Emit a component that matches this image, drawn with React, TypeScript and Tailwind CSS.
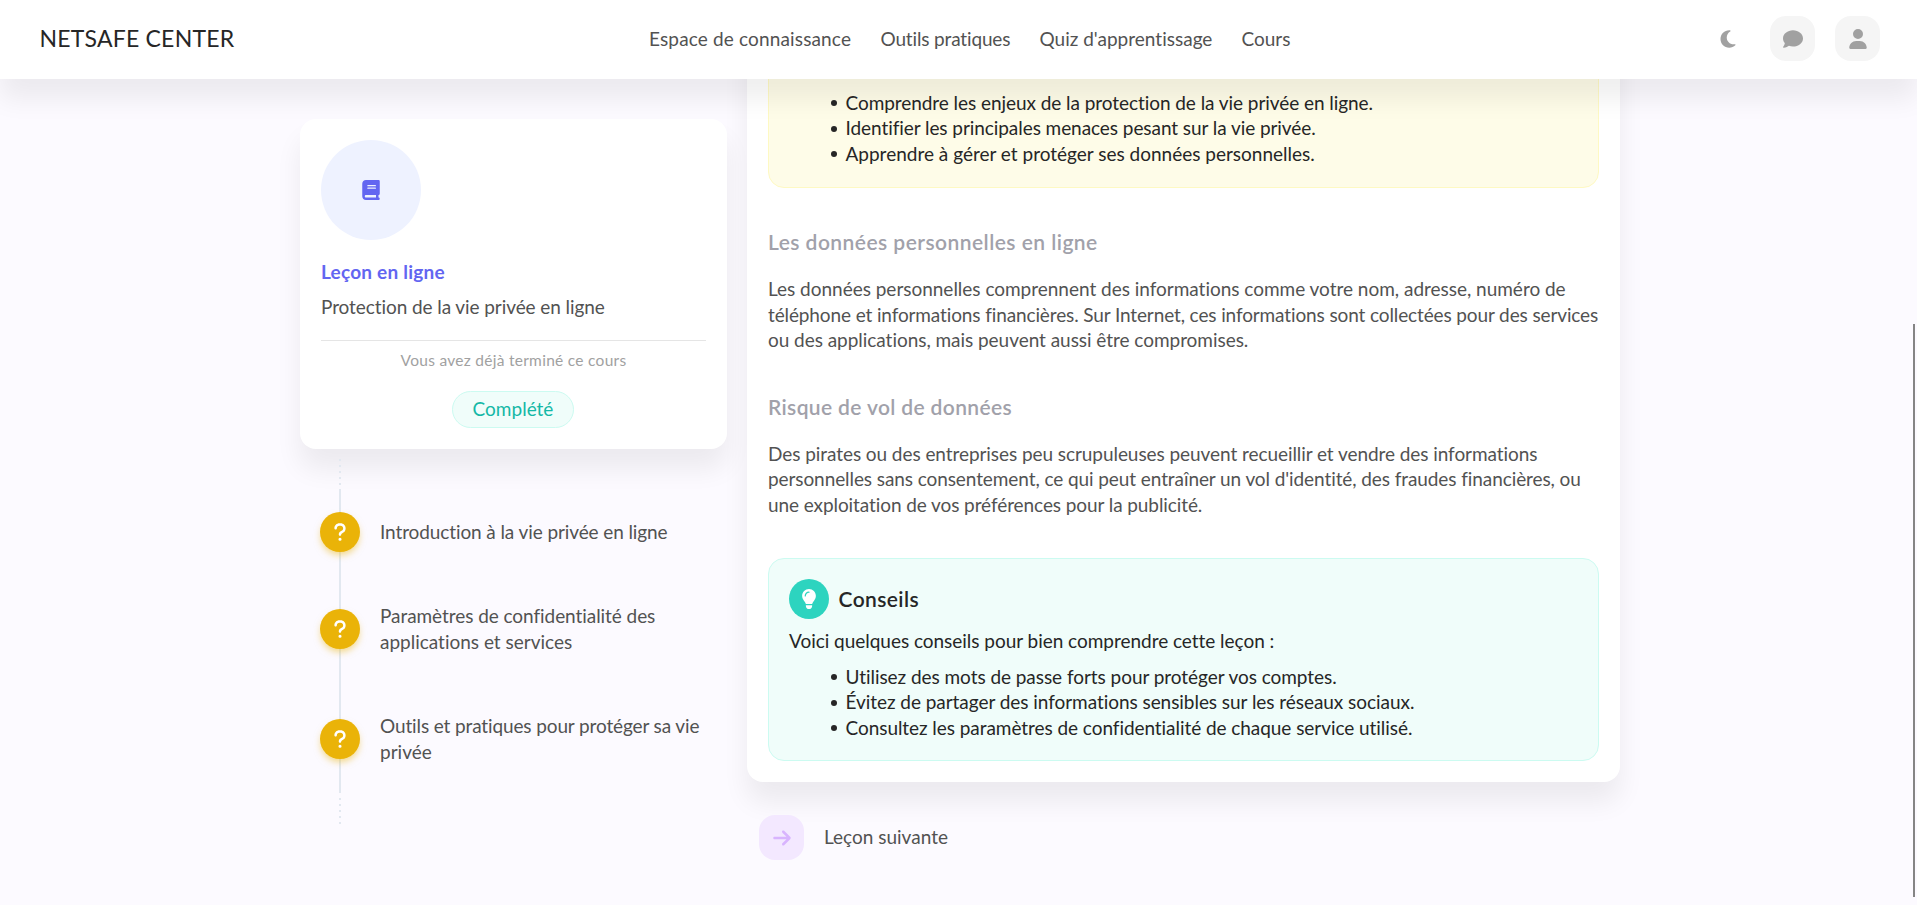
import type { ReactNode } from "react";
import {
  FaMoon,
  FaComment,
  FaUser,
  FaBook,
  FaQuestion,
  FaLightbulb,
  FaArrowRight,
} from "react-icons/fa6";

const cardShadow = "shadow-[0_20px_27px_0_rgba(0,0,0,0.065)]";

function Line({ className = "", children }: { className?: string; children: ReactNode }) {
  return <span className={`block whitespace-nowrap ${className}`}>{children}</span>;
}

function Bullet({ className = "", children }: { className?: string; children: ReactNode }) {
  return (
    <li className="flex items-center gap-[8.5px] pl-[42px] leading-[25.5px]">
      <span className="mt-[2px] size-[6px] shrink-0 rounded-full bg-neutral-800" />
      <span className={`whitespace-nowrap ${className}`}>{children}</span>
    </li>
  );
}

function Header() {
  return (
    <header className="relative z-10 flex h-[79px] shrink-0 items-center bg-white pr-[37px] pl-[39.5px] shadow-[0_20px_27px_0_rgba(0,0,0,0.065)]">
      <div className="w-[609.5px] pb-px text-[23px] tracking-[0.22px] text-neutral-800">NETSAFE CENTER</div>
      <nav className="flex pb-[2px] text-neutral-600">
        <a className="w-[231.5px] tracking-[0.15px]">Espace de connaissance</a>
        <a className="w-[159px] tracking-[-0.15px]">Outils pratiques</a>
        <a className="w-[202px] tracking-[0.01px]">Quiz d'apprentissage</a>
        <a>Cours</a>
      </nav>
      <div className="mb-[2px] ml-auto flex items-center gap-5 text-neutral-400">
        <button className="flex size-[45px] items-center justify-center">
          <FaMoon size={20} />
        </button>
        <button className="flex size-[45px] items-center justify-center rounded-2xl bg-neutral-100">
          <FaComment size={20} />
        </button>
        <button className="flex size-[45px] items-center justify-center rounded-2xl bg-neutral-100">
          <FaUser size={20} />
        </button>
      </div>
    </header>
  );
}

function LessonCard() {
  return (
    <section className={`flex h-[330px] flex-col rounded-2xl bg-white p-[21px] ${cardShadow}`}>
      <div className="flex size-[100px] items-center justify-center rounded-full bg-[#eef2ff] text-[#6366f1]">
        <FaBook size={20} />
      </div>
      <h2 className="mt-[19px] font-bold tracking-[0.22px] text-[#6366f1]">Leçon en ligne</h2>
      <p className="mt-[9.5px] tracking-[-0.08px] text-neutral-600">Protection de la vie privée en ligne</p>
      <hr className="mt-[20px] h-px shrink-0 border-0 bg-[#e5e5e5]" />
      <p className="mt-[8px] text-center text-[15.5px] leading-[22.5px] tracking-[0.28px] text-neutral-400">
        Vous avez déjà terminé ce cours
      </p>
      <span className="mt-[19.5px] mr-[1px] flex h-[37px] w-[122px] items-center justify-center self-center rounded-full border border-[#ccfbf1] bg-[#f0fdfa] pb-px text-[#14b8a6]">
        Complété
      </span>
    </section>
  );
}

function Step({ className = "", children }: { className?: string; children: ReactNode }) {
  return (
    <li className={`flex items-center gap-[20px] ${className}`}>
      <span className="flex size-10 shrink-0 items-center justify-center rounded-full bg-[#eab308] text-white shadow-[0_4px_7px_-1px_rgba(234,179,8,0.5)]">
        <FaQuestion size={20} />
      </span>
      <span>{children}</span>
    </li>
  );
}

function Timeline() {
  return (
    <div className="mt-[10px] grid">
      <div className="ml-[39px] flex w-[2px] flex-col [grid-area:1/1]">
        <span className="h-[30px] bg-[repeating-linear-gradient(to_bottom,#e2e8f0_0_2px,transparent_2px_6px)]" />
        <span className="h-[304px] bg-[#e2e8f0]" />
        <span className="mt-[5px] h-[26px] bg-[repeating-linear-gradient(to_bottom,#e2e8f0_0_2px,transparent_2px_6px)]" />
      </div>
      <ol className="ml-[20px] pt-[53px] text-neutral-600 [grid-area:1/1]">
        <Step>
          <Line className="-mt-px tracking-[-0.1px]">Introduction à la vie privée en ligne</Line>
        </Step>
        <Step className="mt-[51px]">
          <Line className="tracking-[-0.06px]">Paramètres de confidentialité des</Line>
          <Line className="tracking-[-0.01px]">applications et services</Line>
        </Step>
        <Step className="mt-[59px]">
          <Line className="tracking-[-0.125px]">Outils et pratiques pour protéger sa vie</Line>
          <Line>privée</Line>
        </Step>
      </ol>
    </div>
  );
}

function LessonContent() {
  return (
    <article className={`rounded-b-2xl bg-white px-[21px] pt-5 pb-[21px] ${cardShadow}`}>
      <div className="flex h-[168px] flex-col justify-end rounded-2xl border border-[#fef9c3] bg-[#fefce8] pb-[21px] pl-5 text-neutral-800">
        <ul>
          <Bullet className="tracking-[-0.06px]">Comprendre les enjeux de la protection de la vie privée en ligne.</Bullet>
          <Bullet className="tracking-[-0.065px]">Identifier les principales menaces pesant sur la vie privée.</Bullet>
          <Bullet>Apprendre à gérer et protéger ses données personnelles.</Bullet>
        </ul>
      </div>

      <h3 className="mt-10 text-[21px] leading-7 font-semibold tracking-[0.46px] text-[#a1a1aa]">
        Les données personnelles en ligne
      </h3>
      <p className="mt-5 text-neutral-600">
        <Line className="tracking-[-0.018px]">
          Les données personnelles comprennent des informations comme votre nom, adresse, numéro de
        </Line>
        <Line className="tracking-[-0.12px]">
          téléphone et informations financières. Sur Internet, ces informations sont collectées pour des services
        </Line>
        <Line className="tracking-[-0.04px]">ou des applications, mais peuvent aussi être compromises.</Line>
      </p>

      <h3 className="mt-10 text-[21px] leading-7 font-semibold tracking-[0.36px] text-[#a1a1aa]">
        Risque de vol de données
      </h3>
      <p className="mt-5 text-neutral-600">
        <Line className="tracking-[-0.065px]">
          Des pirates ou des entreprises peu scrupuleuses peuvent recueillir et vendre des informations
        </Line>
        <Line className="tracking-[-0.085px]">
          personnelles sans consentement, ce qui peut entraîner un vol d'identité, des fraudes financières, ou
        </Line>
        <Line className="tracking-[-0.085px]">une exploitation de vos préférences pour la publicité.</Line>
      </p>

      <div className="mt-[41px] h-[203px] rounded-2xl border border-[#ccfbf1] bg-[#f0fdfa] p-5 text-neutral-800">
        <div className="flex items-center gap-[9.5px]">
          <span className="flex size-10 items-center justify-center rounded-full bg-[#2dd4bf] text-white">
            <FaLightbulb size={20} />
          </span>
          <h4 className="pb-px text-[21px] leading-7 font-semibold tracking-[0.4px]">Conseils</h4>
        </div>
        <p className="mt-[8.5px] tracking-[-0.03px]">Voici quelques conseils pour bien comprendre cette leçon :</p>
        <ul className="mt-[10.5px]">
          <Bullet className="tracking-[-0.05px]">Utilisez des mots de passe forts pour protéger vos comptes.</Bullet>
          <Bullet className="tracking-[-0.048px]">Évitez de partager des informations sensibles sur les réseaux sociaux.</Bullet>
          <Bullet className="tracking-[-0.057px]">Consultez les paramètres de confidentialité de chaque service utilisé.</Bullet>
        </ul>
      </div>
    </article>
  );
}

export default function App() {
  return (
    <div className="relative flex h-[905px] flex-col overflow-hidden bg-[#fcfaff] font-['Lato','Noto_Sans',sans-serif] text-[19px] leading-[25.5px] font-normal [font-variant-ligatures:none]">
      <Header />
      <main className="flex min-h-0 flex-1 gap-5 pl-[300px]">
        <aside className="w-[427px] shrink-0 pt-10">
          <LessonCard />
          <Timeline />
        </aside>
        <div className="-mt-[79px] w-[873px] shrink-0">
          <LessonContent />
          <a className="mt-[33px] ml-[12px] flex items-center gap-[20px] text-neutral-600">
            <span className="flex size-[45px] items-center justify-center rounded-2xl bg-[#f3e8ff] text-[#d8b4fe]">
              <FaArrowRight size={20} />
            </span>
            <span className="pb-[2px]">Leçon suivante</span>
          </a>
        </div>
      </main>
      <div className="absolute top-[324px] right-[2px] z-20 h-[573px] w-[2px] bg-[#858585]" />
    </div>
  );
}
